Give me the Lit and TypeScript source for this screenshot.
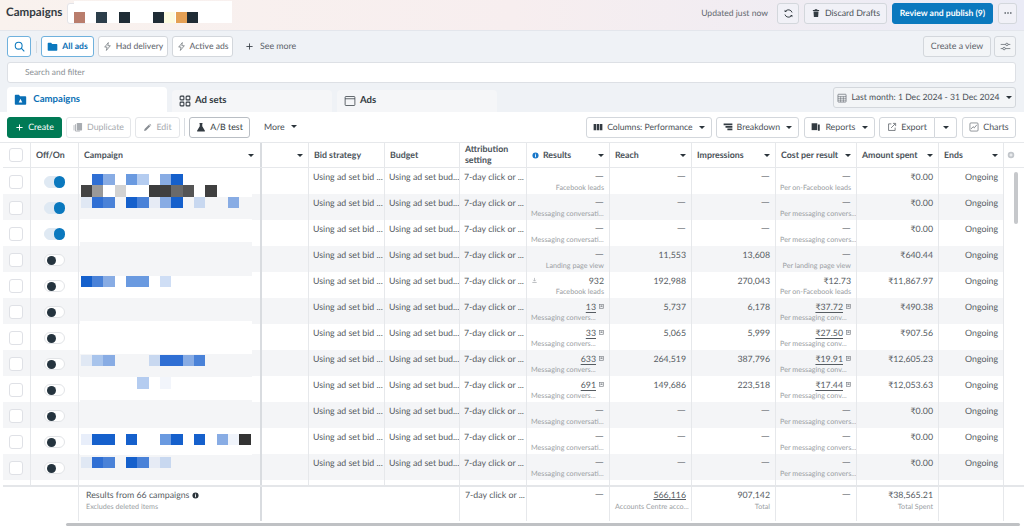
import { LitElement, html, css } from "lit";
import { customElement } from "lit/decorators.js";

const icon = (name: string, w = 10) => {
  const S = (inner: string) => html`<svg width=${w} height=${w} viewBox="0 0 16 16" .innerHTML=${inner}></svg>`;
  const map: Record<string, string> = {
    search: `<circle cx="6.8" cy="6.8" r="5" fill="none" stroke="#0a78be" stroke-width="1.5"/><path d="M10.5 10.5L15 15" stroke="#0a78be" stroke-width="1.6"/>`,
    folder: `<path d="M1 3.5a1 1 0 011-1h4l1.5 2H14a1 1 0 011 1V13a1 1 0 01-1 1H2a1 1 0 01-1-1z" fill="#0a78be"/>`,
    folderA: `<path d="M1 3a1 1 0 011-1h4l1.5 2H14a1 1 0 011 1V13.5a1 1 0 01-1 1H2a1 1 0 01-1-1z" fill="#0a6fb5"/><path d="M8 7l2.2 4.6H5.8z" fill="#fff"/>`,
    bolt: `<path d="M9.5 1L3 9h4.2L6 15l7-8.4H8.6z" fill="none" stroke="#555c63" stroke-width="1.1" stroke-linejoin="round"/>`,
    plus: `<path d="M8 2.5v11M2.5 8h11" stroke="#333b42" stroke-width="1.5"/>`,
    plusW: `<path d="M8 2.5v11M2.5 8h11" stroke="#fff" stroke-width="1.8"/>`,
    refresh: `<path d="M13.2 6.5A5.5 5.5 0 003.4 5M2.8 9.5A5.5 5.5 0 0012.6 11" fill="none" stroke="#333b42" stroke-width="1.4"/><path d="M2.4 2.4v3.4h3.4zM13.6 13.6v-3.4h-3.4z" fill="#333b42"/>`,
    trash: `<path d="M3 3.2h10v1.4H3zM6 1.6h4v1.2H6zM4 5.4h8l-.6 9H4.6z" fill="#333b42"/>`,
    dots: `<circle cx="3.5" cy="8" r="1.3" fill="#333b42"/><circle cx="8" cy="8" r="1.3" fill="#333b42"/><circle cx="12.5" cy="8" r="1.3" fill="#333b42"/>`,
    sliders: `<path d="M1 5h14M1 11h14" stroke="#555c63" stroke-width="1"/><circle cx="10" cy="5" r="1.8" fill="#f0f2f5" stroke="#555c63"/><circle cx="6" cy="11" r="1.8" fill="#f0f2f5" stroke="#555c63"/>`,
    adsets: `<g fill="none" stroke="#333b42" stroke-width="1.4"><rect x="1.5" y="1.5" width="5" height="5" rx="1"/><rect x="9.5" y="1.5" width="5" height="5" rx="1"/><rect x="1.5" y="9.5" width="5" height="5" rx="1"/><rect x="9.5" y="9.5" width="5" height="5" rx="1"/></g>`,
    ads: `<rect x="1.5" y="2" width="13" height="12" rx="1" fill="none" stroke="#333b42" stroke-width="1"/><path d="M1.5 5h13" stroke="#333b42"/>`,
    cal: `<rect x="1.5" y="2" width="13" height="12.5" rx="1" fill="none" stroke="#555c63"/><path d="M1.5 5.5h13M1.5 8.5h13M1.5 11.5h13M5.8 5.5v9M10.2 5.5v9" stroke="#555c63" stroke-width=".8"/>`,
    dup: `<rect x="6" y="1.5" width="8.5" height="12" rx="1" fill="#a8acb1"/><path d="M4 3.5v11h7" fill="none" stroke="#a8acb1" stroke-width="1.4"/><path d="M1.6 5v8.5" stroke="#a8acb1" stroke-width="1.2"/>`,
    pencil: `<path d="M2 14l.8-3.4 7.6-7.6 2.6 2.6-7.6 7.6zM11.2 2.2l1-1 2.6 2.6-1 1z" fill="#888d93"/>`,
    flask: `<path d="M5.5 1.5h5v1.2H10v4l4.3 7.2a.8.8 0 01-.7 1.1H2.4a.8.8 0 01-.7-1.1L6 6.7v-4h-.5z" fill="#333b42"/>`,
    cols: `<path d="M1 3h4v10H1zM6 3h4v10H6zM11 3h4v10h-4z" fill="#333b42"/>`,
    breakdown: `<path d="M1 2.5h14v2.5H1zM4 6.5h11V9H4zM7 10.5h8V13H7z" fill="#333b42"/>`,
    reports: `<path d="M1 2h9v11H1z" fill="#333b42"/><path d="M11 4h3v10H5v-.2h6z" fill="#333b42"/>`,
    exp: `<path d="M7 3H2.5v10.5H13V9" fill="none" stroke="#555c63" stroke-width="1.2"/><path d="M6.5 9.5L13 3M9.5 2.2h4.3v4.3" fill="none" stroke="#555c63" stroke-width="1.2"/>`,
    charts: `<rect x="1.5" y="1.5" width="13" height="13" rx="1.5" fill="none" stroke="#555c63"/><path d="M3.5 11l3-3.5 2 1.8 4-4.8" fill="none" stroke="#555c63" stroke-width="1.1"/>`,
    info: `<circle cx="8" cy="8" r="7" fill="#1877c9"/><path d="M7 4h2v2H7zM7 7h2v5H7z" fill="#fff"/>`,
    infoD: `<circle cx="8" cy="8" r="7" fill="#2b343b"/><path d="M7 4h2v2H7zM7 7h2v5H7z" fill="#fff"/>`,
    addc: `<circle cx="8" cy="8" r="6.5" fill="#c2c6cb"/><path d="M8 4.8v6.4M4.8 8h6.4" stroke="#fff" stroke-width="1.6"/>`,
    dl: `<path d="M8 2v7M5 6.5L8 9.5l3-3" fill="none" stroke="#a2a6ab" stroke-width="1.5"/><path d="M3 12.5h10" stroke="#a2a6ab" stroke-width="1.6"/>`,
    cmp: `<rect x="1.5" y="1.5" width="13" height="13" fill="none" stroke="#777c82" stroke-width="2"/><path d="M5 11l3-3 3 3V5H5z" fill="#777c82"/>`,
  };
  return S(map[name]);
};

const MSG = "Messaging conversati...";
const CONV = "Messaging convers...";
const PM = "Per messaging convers...";
const PC = "Per messaging conv...";
const FB = "Facebook leads";
const PFB = "Per on-Facebook leads";
const D = "—";
const v = (s: string) => (s === D ? html`<span class="dash">${D}</span>` : s);
type Row = { on: boolean; res: string; rs: string; reach: string; imp: string; cost: string; cs: string; amt: string; cmp?: boolean; dl?: boolean };
const ROWS: Row[] = [
  { on: true, res: D, rs: FB, reach: D, imp: D, cost: D, cs: PFB, amt: "₹0.00" },
  { on: true, res: D, rs: MSG, reach: D, imp: D, cost: D, cs: PM, amt: "₹0.00" },
  { on: true, res: D, rs: MSG, reach: D, imp: D, cost: D, cs: PM, amt: "₹0.00" },
  { on: false, res: D, rs: "Landing page view", reach: "11,553", imp: "13,608", cost: D, cs: "Per landing page view", amt: "₹640.44" },
  { on: false, res: "932", rs: FB, reach: "192,988", imp: "270,043", cost: "₹12.73", cs: PFB, amt: "₹11,867.97", dl: true },
  { on: false, res: "13", rs: CONV, reach: "5,737", imp: "6,178", cost: "₹37.72", cs: PC, amt: "₹490.38", cmp: true },
  { on: false, res: "33", rs: CONV, reach: "5,065", imp: "5,999", cost: "₹27.50", cs: PC, amt: "₹907.56", cmp: true },
  { on: false, res: "633", rs: CONV, reach: "264,519", imp: "387,796", cost: "₹19.91", cs: PC, amt: "₹12,605.23", cmp: true },
  { on: false, res: "691", rs: CONV, reach: "149,686", imp: "223,518", cost: "₹17.44", cs: PC, amt: "₹12,053.63", cmp: true },
  { on: false, res: D, rs: MSG, reach: D, imp: D, cost: D, cs: PM, amt: "₹0.00" },
  { on: false, res: D, rs: MSG, reach: D, imp: D, cost: D, cs: PM, amt: "₹0.00" },
  { on: false, res: D, rs: MSG, reach: D, imp: D, cost: D, cs: PM, amt: "₹0.00" },
];

// redaction bands over the campaign-name column: [top, bottom, colour], page y
const T0 = 143;
const BANDS: [number, number, string][] = [
  [168, 197, "#fff"], [197, 219, "#f4f5f7"], [219, 242, "#fff"], [242, 276, "#f4f5f7"], [276, 298, "#fff"],
  [298, 321, "#f4f5f7"], [321, 354, "#fff"], [354, 377, "#f4f5f7"], [377, 400, "#fff"], [400, 428, "#f4f5f7"],
  [428, 455, "#fff"], [455, 480, "#f4f5f7"],
];
const b1 = "#1560cc", b2 = "#2f6fd4", b3 = "#4a82d8", b4 = "#6a9ae0", b5 = "#88ace4", b6 = "#b4ccf0", b7 = "#c8d8f0", b8 = "#e0e8f4";
const TILES: [number, Record<number, string>][] = [
  [174, { 1: b2, 2: b5, 4: b4, 5: b6, 7: b5, 8: b1 }],
  [185.3, { 0: "#444", 1: "#999", 3: "#d2d2d2", 6: "#3c3c3c", 7: "#404040", 8: "#6a6a6a", 9: "#555", 11: "#404040" }],
  [197, { 0: b8, 1: b2, 2: b3, 4: b1, 5: b3, 6: "#e6ebf5", 7: b5, 8: b1, 10: b7, 13: b5 }],
  [276, { 0: b1, 1: b3, 2: b5, 4: b4, 5: b4, 7: "#cfdef5" }],
  [354.7, { 0: b8, 1: "#a8c4ec", 2: b5, 6: b7, 7: b2, 8: b2, 9: b5, 10: b3 }],
  [377.3, { 5: b6, 7: "#f2f5fb" }],
  [434, { 0: "#e8eefa", 1: b1, 2: b1, 4: b1, 7: b4, 8: b1, 10: b1, 12: b5, 13: "#f0f4fb", 14: "#333" }],
  [456.7, { 0: b8, 1: b2, 2: b3, 4: b1, 5: b3, 6: "#e6ebf5", 7: b7 }],
];
const HEAD_TILES: [number, string][] = [[74, "#b97d6c"], [96, "#2c3e4a"], [119, "#1f2c35"], [153, "#1f2c35"], [164, "#fdfbe0"], [176, "#e4a055"], [187, "#1f2c35"]];

@customElement("app-root")
export class AppRoot extends LitElement {
  static styles = css`
    :host { display: block; width: 1024px; height: 526px; overflow: hidden; position: relative; background: #fff;
      font-family: "Lato", "Roboto", sans-serif; font-size: 8.8px; color: #4b5157; line-height: 1.2; text-rendering: geometricPrecision; }
    svg { display: block; flex: none; }
    .top { height: 31px; display: flex; align-items: center; padding: 0 7px 5px 6px; box-sizing: border-box;
      background: linear-gradient(90deg, #f9f2ee, #f7eeef 50%, #eaebf6); }
    .title { font-size: 11.6px; font-weight: 700; color: #333b42; width: 61px; }
    .acct { width: 20px; height: 21px; background: #fff; border: 1px solid #e4e4e8; border-radius: 3px; box-sizing: border-box; }
    .mask { position: absolute; left: 74px; top: 1px; width: 158px; height: 22px; background: #fff; }
    .mt { position: absolute; top: 10.5px; width: 11.4px; height: 11.4px; }
    .updated { margin-left: auto; margin-right: 9px; color: #62686e; font-size: 8.6px; }
    .btn { display: flex; align-items: center; justify-content: center; gap: 4px; height: 21px; box-sizing: border-box; flex: none;
      border: 1px solid #d3d7dc; border-radius: 3px; background: #fff; color: #4b5157; font-size: 8.8px; white-space: nowrap; }
    .top .btn { background: #f1f1f7; }
    .top .btn + .btn { margin-left: 5px; }
    .refresh { width: 22px; } .discard { width: 83px; } .topmore { width: 19px; }
    .publish { width: 101px; background: #0a78be !important; border-color: #0a78be; color: #fff; font-weight: 700; font-size: 8.6px !important; }
    .panel { background: #eff2f6; height: 82px; box-sizing: border-box; padding: 5px 8px 0 7px; display: flex; flex-direction: column;
      border-top: 1px solid #e3e6ec; margin-top: -1px; }
    .chips { display: flex; align-items: center; height: 21px; flex: none; }
    .chips .btn { margin-right: 4px; font-size: 8.6px; color: #5c6269; }
    .sbtn { width: 24px; border-color: #6fb1dd; }
    .sep { width: 1px; height: 12px; background: #d8dce1; margin: 0 4px 0 1px; flex: none; }
    .allads { width: 53px; border-color: #6fb1dd; color: #0a6fb5 !important; font-weight: 700; }
    .had { width: 70px; } .active { width: 61px; }
    .more { display: flex; align-items: center; gap: 6px; margin-left: 8px; color: #5c6269; font-size: 8.8px; }
    .spacer { margin-left: auto; }
    .cview { width: 68px; background: #f3f5f7; margin-right: 3px !important; font-size: 8.8px !important; }
    .tune { width: 22px; background: #f3f5f7; margin-right: 0 !important; }
    .sfield { height: 21px; margin-top: 5px; background: #fff; border: 1px solid #dde0e5; border-radius: 3px; box-sizing: border-box; flex: none;
      padding-left: 17px; display: flex; align-items: center; color: #8a8f95; font-size: 8.4px; }
    .tabs { display: flex; margin-top: 4px; flex: 1; align-items: flex-end; gap: 5px; }
    .tab { width: 160px; height: 22px; background: #f5f6f8; border-radius: 4px 4px 0 0; display: flex; align-items: center; gap: 4px; padding-left: 7px; box-sizing: border-box;
      font-size: 9.6px; font-weight: 700; color: #333b42; }
    .tab.on { height: 25px; background: #fff; color: #0a6fb5; }
    .date { width: 183px; margin-left: auto; align-self: flex-start; background: #f3f5f7; gap: 4px; font-size: 8.6px !important; }
    .caret { width: 0; height: 0; border-left: 3px solid transparent; border-right: 3px solid transparent; border-top: 3.4px solid #2b343b; flex: none; }
    .bar { height: 30px; background: #fff; display: flex; align-items: center; padding: 0 8px 0 7px; box-sizing: border-box; }
    .bar .btn { margin-right: 4px; }
    .create { width: 55px; background: #007a55; border-color: #007a55; color: #fff; }
    .dup { width: 65px; color: #a5a9ae; border-color: #e4e6e9; }
    .edit { width: 45px; color: #a5a9ae; border-color: #e4e6e9; margin-right: 4px !important; }
    .vsep { width: 1px; height: 18px; background: #d8dce1; margin-right: 4px; flex: none; }
    .ab { width: 61px; color: #333b42; border-color: #b9bec4; }
    .bmore { display: flex; align-items: center; gap: 6px; margin-left: 10px; color: #4b5157; }
    .cols { width: 126px; margin-left: auto; font-size: 8.6px !important; } .brk { width: 83px; margin-right: 5px !important; } .rep { width: 71px; }
    .exp { width: 56px; border-radius: 3px 0 0 3px; margin-right: 0 !important; }
    .expc { width: 22px; border-radius: 0 3px 3px 0; border-left: none; margin-right: 5px !important; }
    .chart { width: 54px; margin-right: 0 !important; }
    .table { position: relative; padding-left: 3px; border-top: 1px solid #e6e8eb; background: #fff; }
    .grid { display: grid; grid-template-columns: 28px 48px 183px 47px 76px 75px 67px 83px 82px 84px 81px 82px 65px 20px; }
    .head { height: 25px; border-bottom: 1px solid #e6e8eb; box-sizing: border-box; }
    .hc { display: flex; align-items: center; padding: 0 5px 0 5px; border-right: 1px solid #e6e8eb; font-weight: 700; color: #4a5259; box-sizing: border-box; gap: 4px; }
    .hc > span { flex: 1; }
    .hc.wide { border-right: 2px solid #d9dce0; padding-right: 6px; }
    .row { height: 26px; }
    .row.alt { background: #f4f5f7; }
    .row.tail { height: 5px; }
    .c { border-right: 1px solid #e6e8eb; padding: 4px 5px 0 4px; box-sizing: border-box; white-space: nowrap; overflow: hidden; min-width: 0; color: #565c62; }
    .c.wide { border-right: 2px solid #d9dce0; }
    .c.last { border-right: none; background: #fff; }
    .num { text-align: right; }
    .dash { font-size: 11.5px; line-height: 0; color: #7d8186; }
    .sub { font-size: 7.2px; color: #9a9ea3; margin-top: 1.5px; }
    .sub.l { text-align: left; }
    .val { display: flex; justify-content: flex-end; align-items: center; gap: 3px; height: 10.5px; }
    .val u { text-decoration-thickness: 0.6px; text-underline-offset: 1.5px; }
    .val svg { margin-top: -2px; }
    .val .dlw { margin-right: auto; }
    .cb { width: 14px; height: 14px; border: 1px solid #dfe1e6; border-radius: 3px; background: #fff; box-sizing: border-box; }
    .cbc { padding: 7px 0 0 6px; }
    .hcb { display: flex; align-items: center; padding-left: 6px; border-right: 1px solid #e6e8eb; }
    .hadd { display: flex; align-items: center; padding-left: 3px; }
    .tgc { padding: 8px 0 0 13px; overflow: visible; }
    .tg { width: 21px; height: 12px; border-radius: 6px; box-sizing: border-box; border: 1px solid #e2e4e7; background: #fff; display: flex; align-items: center; padding-left: 1.5px; }
    .tg i { width: 9px; height: 9px; border-radius: 50%; background: #25343f; display: block; }
    .tg.on { background: #dfe9f3; border-color: #dfe9f3; justify-content: flex-end; padding: 0; }
    .tg.on i { width: 11.5px; height: 11.5px; background: #0a78be; margin-right: -1px; flex: none; }
    .band { position: absolute; left: 80px; width: 172px; }
    .tile { position: absolute; width: 11.4px; height: 11.4px; }
    .vbar { position: absolute; left: 1014px; top: 29px; width: 4px; height: 52px; border-radius: 2px; background: #c6c8cb; }
    .foot { display: grid; grid-template-columns: 76px 183px 198px 67px 83px 82px 84px 81px 82px 65px 20px; height: 36px; border-top: 2px solid #e4e6e9; box-sizing: border-box; }
    .f { border-right: 1px solid #e6e8eb; padding: 3px 5px 0 5px; white-space: nowrap; overflow: hidden; color: #565c62; }
    .f.wide { border-right: 2px solid #d9dce0; padding-left: 7px; }
    .f.plain { border-right: none; }
    .f .sub { margin-top: 2.5px; }
    .frow { display: flex; align-items: center; gap: 3px; }
    .hbar { position: absolute; left: 66px; top: 523px; width: 954px; height: 3px; background: #bfc1c4; border-radius: 2px; }
  `;

  private head(label: any, caret = true, extra: any = "") {
    return html`<div class="hc">${extra}<span>${label}</span>${caret ? html`<i class="caret"></i>` : ""}</div>`;
  }

  render() {
    return html`
      <div class="top">
        <div class="title">Campaigns</div>
        <div class="acct"></div>
        <div class="updated">Updated just now</div>
        <div class="btn refresh">${icon("refresh", 11)}</div>
        <div class="btn discard">${icon("trash", 10)}Discard Drafts</div>
        <div class="btn publish">Review and publish (9)</div>
        <div class="btn topmore">${icon("dots", 10)}</div>
      </div>
      <div class="mask">
        ${HEAD_TILES.map(([x, c]) => html`<div class="mt" style="left:${x - 74}px;background:${c}"></div>`)}
      </div>

      <div class="panel">
        <div class="chips">
          <div class="btn sbtn">${icon("search", 11)}</div>
          <div class="sep"></div>
          <div class="btn allads">${icon("folder", 11)}All ads</div>
          <div class="btn had">${icon("bolt", 9)}Had delivery</div>
          <div class="btn active">${icon("bolt", 9)}Active ads</div>
          <div class="more">${icon("plus", 9)}See more</div>
          <div class="btn cview spacer">Create a view</div>
          <div class="btn tune">${icon("sliders", 11)}</div>
        </div>
        <div class="sfield">Search and filter</div>
        <div class="tabs">
          <div class="tab on">${icon("folderA", 13)}&nbsp;Campaigns</div>
          <div class="tab">${icon("adsets", 12)}Ad sets</div>
          <div class="tab">${icon("ads", 12)}Ads</div>
          <div class="btn date">${icon("cal", 10)}Last month: 1 Dec 2024 - 31 Dec 2024&nbsp;<i class="caret"></i></div>
        </div>
      </div>

      <div class="bar">
        <div class="btn create">${icon("plusW", 9)}Create</div>
        <div class="btn dup">${icon("dup", 10)}Duplicate</div>
        <div class="btn edit">${icon("pencil", 9)}Edit</div>
        <div class="vsep"></div>
        <div class="btn ab">${icon("flask", 10)}A/B test</div>
        <div class="bmore">More <i class="caret"></i></div>
        <div class="btn cols">${icon("cols", 10)}Columns: Performance&nbsp;<i class="caret"></i></div>
        <div class="btn brk">${icon("breakdown", 10)}Breakdown&nbsp;<i class="caret"></i></div>
        <div class="btn rep">${icon("reports", 10)}Reports&nbsp;<i class="caret"></i></div>
        <div class="btn exp">${icon("exp", 10)}Export</div>
        <div class="btn expc"><i class="caret"></i></div>
        <div class="btn chart">${icon("charts", 10)}Charts</div>
      </div>

      <div class="table">
        <div class="grid head">
          <div class="hcb"><div class="cb"></div></div>
          ${this.head("Off/On", false)}
          <div class="hc wide"><span>Campaign</span><i class="caret"></i></div>
          ${this.head("", true)}
          ${this.head("Bid strategy", false)}
          ${this.head("Budget", false)}
          ${this.head("Attribution setting", false)}
          ${this.head("Results", true, icon("info", 7))}
          ${this.head("Reach")}
          ${this.head("Impressions")}
          ${this.head("Cost per result")}
          ${this.head("Amount spent")}
          ${this.head("Ends")}
          <div class="hadd">${icon("addc", 8)}</div>
        </div>

        ${ROWS.map((r, i) => html`
          <div class="grid row ${i % 2 ? "alt" : ""}">
            <div class="c cbc"><div class="cb"></div></div>
            <div class="c tgc"><div class="tg ${r.on ? "on" : ""}"><i></i></div></div>
            <div class="c wide"></div>
            <div class="c"></div>
            <div class="c">Using ad set bid ...</div>
            <div class="c">Using ad set bud...</div>
            <div class="c">7-day click or ...</div>
            <div class="c num">
              <div class="val">
                ${r.dl ? html`<span class="dlw">${icon("dl", 7)}</span>` : ""}
                ${r.cmp ? html`<u>${r.res}</u>${icon("cmp", 5)}` : v(r.res)}
              </div>
              <div class="sub ${r.rs.endsWith("...") ? "l" : ""}">${r.rs}</div>
            </div>
            <div class="c num">${v(r.reach)}</div>
            <div class="c num">${v(r.imp)}</div>
            <div class="c num">
              <div class="val">${r.cmp ? html`<u>${r.cost}</u>${icon("cmp", 5)}` : v(r.cost)}</div>
              <div class="sub ${r.cs.endsWith("...") ? "l" : ""}">${r.cs}</div>
            </div>
            <div class="c num">${r.amt}</div>
            <div class="c num">Ongoing</div>
            <div class="c last"></div>
          </div>`)}
        <div class="grid row tail">
          ${Array.from({ length: 14 }, (_, k) => html`<div class="c ${k === 2 ? "wide" : ""} ${k === 13 ? "last" : ""}"></div>`)}
        </div>

        ${BANDS.map(([a, b, c]) => html`<div class="band" style="top:${a - T0}px;height:${b - a}px;background:${c}"></div>`)}
        ${TILES.flatMap(([y, t]) => Object.entries(t).map(([k, c]) =>
          html`<div class="tile" style="top:${y - T0}px;left:${80.7 + +k * 11.33}px;background:${c}"></div>`))}
        <div class="vbar"></div>

        <div class="foot">
          <div class="f"></div>
          <div class="f wide">
            <div class="frow">Results from 66 campaigns ${icon("infoD", 7)}</div>
            <div class="sub">Excludes deleted items</div>
          </div>
          <div class="f"></div>
          <div class="f">7-day click or ...</div>
          <div class="f num">${v(D)}</div>
          <div class="f num"><u>566,116</u><div class="sub l">Accounts Centre acco...</div></div>
          <div class="f num">907,142<div class="sub">Total</div></div>
          <div class="f num">${v(D)}</div>
          <div class="f num">₹38,565.21<div class="sub">Total Spent</div></div>
          <div class="f"></div>
          <div class="f plain"></div>
        </div>
      </div>
      <div class="hbar"></div>
    `;
  }
}
